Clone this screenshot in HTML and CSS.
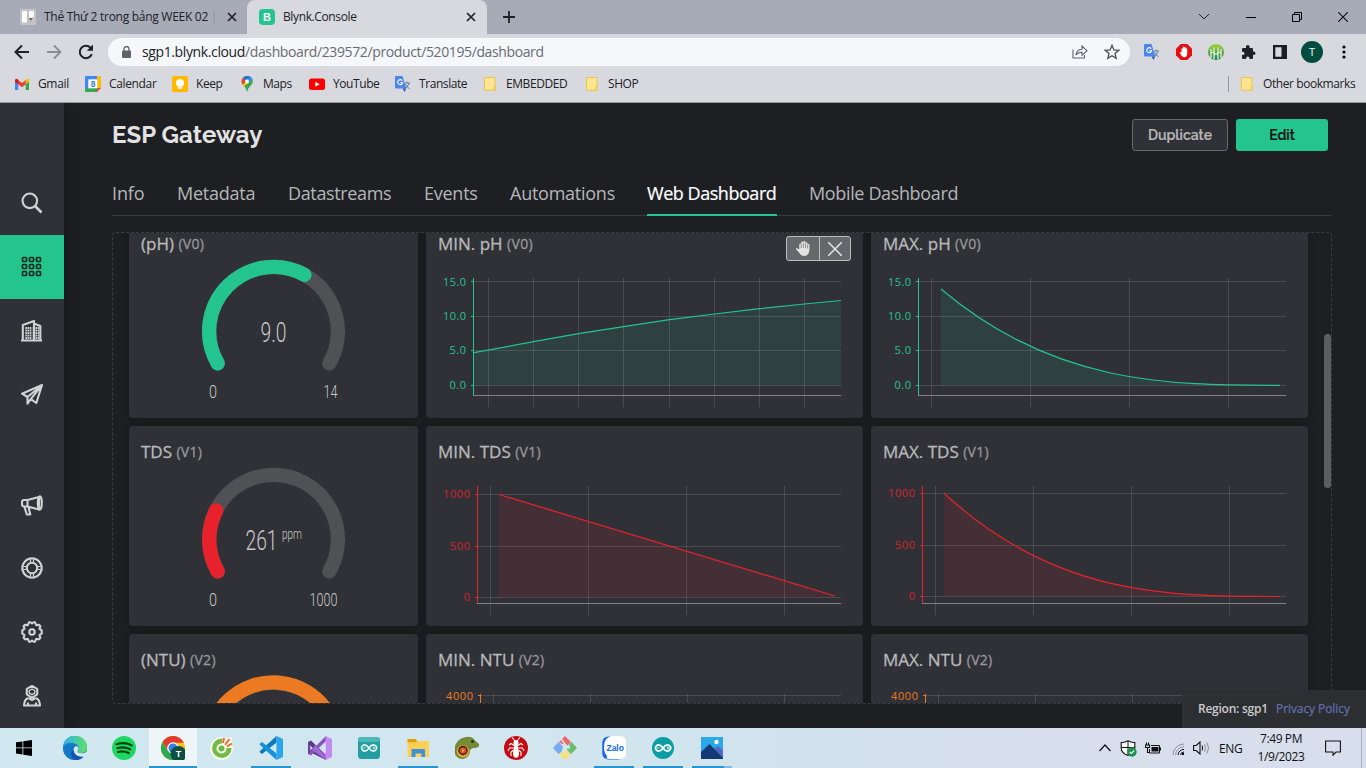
FILE: index.html
```html
<!DOCTYPE html>
<html lang="en">
<head>
<meta charset="utf-8">
<title>Blynk.Console</title>
<link rel="stylesheet" href="styles.css">
</head>
<body>
<svg class="defs" width="0" height="0">
  <defs>
    <symbol id="folder" viewBox="0 0 12 14"><path d="M.5.5h10.5v9.2l.5.3v3.3H.5z" fill="#ffe591" stroke="#ebc445"/><path d="M9.500 13V10.500q0-1 1-1h.6" fill="none" stroke="#ebc445"/></symbol>
    <symbol id="gtrans" viewBox="0 0 16 16"><path d="M7 4h8.200q.8 0 .8.8V15q0 .8-.8.8H9z" fill="#d5d8dd"/><path d="M1 0h6.500l3.800 12.500H1q-1 0-1-1V1q0-1 1-1z" fill="#4a86f0"/><path d="M7.500 12.500h3.800L9.500 16z" fill="#3059b8"/><path d="M7.300 4.700a2.500 2.500 0 1 0 .4 2H5.300" fill="none" stroke="#fff" stroke-width="1.100"/><path d="M9.500 7h5.300M12 5.600V7M14 7q-1 4-4 5.500M10.500 8.500q1.500 3 4.200 4.300" fill="none" stroke="#607d9b" stroke-width="1"/></symbol>
    <symbol id="close" viewBox="0 0 10 10"><path d="M1 1l8 8M9 1L1 9" stroke="#202124" stroke-width="1.700" fill="none"/></symbol>
  </defs>
</svg>

<header class="browser">
  <div class="tabstrip">
    <div class="tab tab-idle">
      <svg class="fav" viewBox="0 0 16 16"><rect width="16" height="16" rx="1.500" fill="#c3c3c3"/><rect x="2" y="2" width="5" height="11.500" rx="1" fill="#fff"/><rect x="9" y="2" width="5" height="7" rx="1" fill="#fff"/><path d="M7 7q2 4 6 1l-2 4z" fill="#666"/></svg>
      <span class="tab-title idle-title">Thẻ Thứ 2 trong bảng WEEK 02 <i class="cut">|</i></span>
      <svg class="tab-x" viewBox="0 0 10 10"><use href="#close"/></svg>
    </div>
    <div class="tab tab-active">
      <span class="fav blynk">B</span>
      <span class="tab-title active-title">Blynk.Console</span>
      <svg class="tab-x" viewBox="0 0 10 10"><use href="#close"/></svg>
    </div>
    <svg class="plus" viewBox="0 0 12 12"><path d="M6 0v12M0 6h12" stroke="#202124" stroke-width="1.800"/></svg>
    <div class="winbtns">
      <svg width="12" height="8" viewBox="0 0 12 8"><path d="M1 1l5 5 5-5" fill="none" stroke="#222"/></svg>
      <svg width="10" height="10" viewBox="0 0 10 10"><path d="M0 5.500h10" stroke="#000"/></svg>
      <svg width="10" height="10" viewBox="0 0 10 10"><path d="M.5 2.500h7v7h-7zM2.500 2.500v-2h7v7h-2" fill="none" stroke="#000"/></svg>
      <svg width="10" height="10" viewBox="0 0 10 10"><path d="M0 0l10 10M10 0L0 10" stroke="#111" stroke-width="1.100"/></svg>
    </div>
  </div>
  <div class="toolbar">
    <svg class="nav n1" viewBox="0 0 16 16"><path d="M15 8H2M8 1.500L1.500 8 8 14.500" fill="none" stroke="#202124" stroke-width="2"/></svg>
    <svg class="nav n2" viewBox="0 0 16 16"><path d="M1 8h13M8 1.500L14.500 8 8 14.500" fill="none" stroke="#8b8d93" stroke-width="1.800"/></svg>
    <svg class="nav n3" viewBox="0 0 16 16"><path d="M13.800 10.200a6.200 6.200 0 1 1-1.300-6.500" fill="none" stroke="#202124" stroke-width="2"/><path d="M15 .6v6.200H8.800z" fill="#202124"/></svg>
    <div class="omnibox">
      <svg class="lock" viewBox="0 0 9 12"><rect y="4.500" width="9" height="7.500" rx="1" fill="#5f6368"/><path d="M2 5V3a2.500 2.500 0 0 1 5 0v2" fill="none" stroke="#5f6368" stroke-width="1.300"/></svg>
      <span class="url"><b>sgp1.blynk.cloud</b>/dashboard/239572/product/520195/dashboard</span>
      <svg class="share" viewBox="0 0 16 14"><path d="M1 4.500V13h11.500v-3" fill="none" stroke="#5f6368" stroke-width="1.100"/><path d="M4 10q.5-5.500 6-5.800V1l5 4.700-5 4.600V7.200Q6 7 4 10z" fill="none" stroke="#5f6368" stroke-width="1.100"/></svg>
      <svg class="star" viewBox="0 0 16 16"><path d="M8 1.300l1.900 4.600 4.900.4-3.800 3.200 1.200 4.900L8 11.800l-4.200 2.600L5 9.500 1.200 6.300l4.900-.4z" fill="none" stroke="#4c4f54" stroke-width="1.300"/></svg>
    </div>
    <svg class="ext e1" viewBox="0 0 16 16"><use href="#gtrans"/></svg>
    <svg class="ext e2" viewBox="0 0 16 16"><path d="M4.700 0h6.600L16 4.700v6.600L11.300 16H4.700L0 11.300V4.700z" fill="#e80c13"/><path d="M5.500 10V5q0-.8.700-.8t.7.800V3.200q0-.7.700-.7t.7.700V3.800q0-.7.700-.7t.8.700V5q0-.7.700-.7t.7.700v5q0 3-3 3.200-2 0-3-2L3.700 8.500q.6-.7 1.800 0z" fill="#fff"/></svg>
    <svg class="ext e3" viewBox="0 0 16 16"><defs><linearGradient id="gg" x2="0" y2="1"><stop stop-color="#a8cf3c"/><stop offset="1" stop-color="#15894a"/></linearGradient></defs><circle cx="8" cy="8" r="8" fill="url(#gg)"/><path d="M3 5v9M6 3.500v12M10 3.500v12M13 5v9M3 8.500h3M10 8.500h3M6 10h4" stroke="#fff" stroke-width="1.100" fill="none"/></svg>
    <svg class="ext e4" viewBox="0 0 16 16"><path d="M6 2.700a1.800 1.800 0 0 1 3.600 0V4H12q1 0 1 1v2.500h.7a1.800 1.800 0 0 1 0 3.600H13V14q0 1-1 1H9.500v-.8a1.700 1.700 0 0 0-3.400 0v.8H3q-1 0-1-1v-2.900h.8a1.700 1.700 0 0 0 0-3.400H2V5q0-1 1-1h3z" fill="#202124"/></svg>
    <svg class="ext e5" viewBox="0 0 16 16"><path d="M1 1h14v14H1zM3.300 3.300v9.400h6.200V3.300z" fill="#1c1d20" fill-rule="evenodd"/></svg>
    <span class="avatar">T</span>
    <svg class="dots" viewBox="0 0 4 14"><circle cx="2" cy="2" r="1.600"/><circle cx="2" cy="7" r="1.600"/><circle cx="2" cy="12" r="1.600"/></svg>
  </div>
  <nav class="bookmarks">
    <a class="bm w71"><svg viewBox="0 0 16 16"><path d="M1 14V3.500L4.300 6V14z" fill="#4285f4"/><path d="M11.700 14V6L15 3.500V14z" fill="#34a853"/><path d="M3.500 3.500L8 7l4.500-3.500v4.300L8 11.200 3.500 7.800z" fill="#ea4335"/><path d="M1 4.500Q1 2 3.300 3l1 .8v4.500L1 5.800z" fill="#c5221f"/><path d="M15 4.500Q15 2 12.700 3l-1 .8v4.500L15 5.800z" fill="#fbbc04"/></svg><span>Gmail</span></a>
    <a class="bm w87"><svg viewBox="0 0 16 16"><path d="M0 1q0-1 1-1h11v4H4v8H0z" fill="#4285f4"/><path d="M12 0h3q1 0 1 1v11h-4z" fill="#fbbc04"/><path d="M0 12h12v4H1q-1 0-1-1z" fill="#34a853"/><path d="M12 12h4l-4 4z" fill="#ea4335"/><path d="M3.300 3.300h9v9h-9z" fill="#fff"/><text x="7.900" y="11" class="cal">8</text></svg><span>Calendar</span></a>
    <a class="bm w67"><svg viewBox="0 0 16 16"><rect width="16" height="16" rx="1.500" fill="#ffba00"/><circle cx="8" cy="7" r="4" fill="#fff"/><path d="M5.800 9.500h4.400v3.200H5.800z" fill="#fff"/><path d="M5.800 11h4.400" stroke="#ffd96a" stroke-width=".7"/></svg><span>Keep</span></a>
    <a class="bm w70"><svg viewBox="0 0 16 16"><path d="M8 16Q7 11.500 4 8.800A5.500 5.500 0 1 1 12.600 8.500Q9 11.500 8 16z" fill="#34a853"/><path d="M3.200 8L8.300 3l1.500 3.800L5.300 10.300z" fill="#fbbc04"/><path d="M2.500 5.500a5.600 5.600 0 0 1 2-4L8 5 3.500 8.500q-1-1.300-1-3z" fill="#ea4335"/><path d="M4.500 1.500q3-2.500 6.500-.9L7 5z" fill="#1a73e8"/><path d="M11 .6q2 .9 2.500 3.200L9.300 7 8.500 4z" fill="#4285f4"/><circle cx="8" cy="5.500" r="2" fill="#fff"/></svg><span>Maps</span></a>
    <a class="bm w86"><svg viewBox="0 0 16 16"><rect y="2.500" width="16" height="11.500" rx="2.500" fill="#f00"/><path d="M6.300 5.800v5l4.400-2.500z" fill="#fff"/></svg><span>YouTube</span></a>
    <a class="bm w88"><svg viewBox="0 0 16 16"><use href="#gtrans"/></svg><span>Translate</span></a>
    <a class="bm fold w102"><svg viewBox="0 0 12 14"><use href="#folder"/></svg><span>EMBEDDED</span></a>
    <a class="bm fold"><svg viewBox="0 0 12 14"><use href="#folder"/></svg><span>SHOP</span></a>
    <i class="bmsep"></i>
    <a class="bm fold other"><svg viewBox="0 0 12 14"><use href="#folder"/></svg><span>Other bookmarks</span></a>
  </nav>
</header>

<div class="app">
  <aside class="sidebar">
    <div class="side-group">
      <a class="side"><svg viewBox="0 0 22 22"><circle cx="8.800" cy="8.800" r="7.300"/><path d="M14 14l6.500 6.500" stroke-width="2.600"/></svg></a>
      <a class="side on"><svg viewBox="0 0 22 22"><g class="grid"><rect x="1.500" y="1.500" width="4" height="4" rx=".8"/><rect x="8.500" y="1.500" width="4" height="4" rx=".8"/><rect x="15.500" y="1.500" width="4" height="4" rx=".8"/><rect x="1.500" y="8.500" width="4" height="4" rx=".8"/><rect x="8.500" y="8.500" width="4" height="4" rx=".8"/><rect x="15.500" y="8.500" width="4" height="4" rx=".8"/><rect x="1.500" y="15.500" width="4" height="4" rx=".8"/><rect x="8.500" y="15.500" width="4" height="4" rx=".8"/><rect x="15.500" y="15.500" width="4" height="4" rx=".8"/></g></svg></a>
      <a class="side"><svg viewBox="0 0 22 22"><path d="M0 20.500h21M1.800 20V5L13 1v19M13 3.500L19.300 6v14"/><path d="M4.300 8h7M4.300 10.500h7M4.300 13h7M4.300 15.500h7M4.300 18h7M14.500 8h3.500M14.500 10.500h3.500M14.500 13h3.500M14.500 15.500h3.500M14.500 18h3.500" stroke-dasharray="1.600 .6" stroke-width="1.800"/></svg></a>
      <a class="side"><svg viewBox="0 0 22 22"><path d="M21 1L1 9.700l5.500 3.300v6.700l3.300-4.500 5.500 3.800zM21 1L6.500 13M21 1L9.800 15.200l-3 4"/></svg></a>
    </div>
    <div class="side-group">
      <a class="side low"><svg viewBox="0 0 22 22"><path d="M6.500 5L18 2v12.500L6.500 11.500H3Q1 11.500 1 9V7.500Q1 5 3 5zM6.500 5v6.500M3.500 12l2.300 7.500h3.500L7.500 12"/><ellipse cx="18.800" cy="8" rx="2" ry="6.600"/></svg></a>
      <a class="side"><svg viewBox="0 0 22 22"><circle cx="11" cy="11" r="9.700"/><circle cx="11" cy="11" r="5.200"/><path d="M9.500 1.500v4.500M12.500 1.500v4.500M9.500 16v4.500M12.500 16v4.500M1.500 9.500H6M1.500 12.500H6M16 9.500h4.500M16 12.500h4.500" stroke-width="1.200"/></svg></a>
      <a class="side"><svg viewBox="0 0 22 22"><path d="M8 1.300h1.500L11 2.500l1.500-1.200H14l1.200 2.800 3-.2 1.200 1.400-.9 2.600 2.200 1.500v3.200l-2.200 1.500.9 2.600-1.200 1.500-3-.3L14 20.700h-1.500L11 19.500l-1.500 1.200H8l-1.200-2.800-3 .3-1.200-1.500.9-2.600-2.200-1.500V9.400l2.200-1.500-.9-2.600 1.200-1.400 3 .2z"/><circle cx="11" cy="11" r="2.700"/></svg></a>
      <a class="side"><svg viewBox="0 0 22 22"><path d="M11 .9l5.200 3v5.500L11 12.800 5.800 9.400V3.900z"/><path d="M11 4l2.700 1.500v2.600L11 9.700 8.300 8.100V5.500z" stroke-width="1.400"/><path d="M7 13q-3.700 1.500-4 7.500h16q-.3-6-4-7.500M7.500 13L11 15l3.500-2M7 17.500v2.500M15 17.500v2.500"/></svg></a>
    </div>
  </aside>

  <main class="main">
    <div class="head">
      <h1>ESP Gateway</h1>
      <button class="btn dup"><span>Duplicate</span></button>
      <button class="btn edit"><span>Edit</span></button>
    </div>
    <nav class="tabs">
      <a class="t1"><span>Info</span></a><a class="t2"><span>Metadata</span></a><a class="t3"><span>Datastreams</span></a><a class="t4"><span>Events</span></a><a class="t5"><span>Automations</span></a><a class="t6 current"><span>Web Dashboard</span></a><a class="t7"><span>Mobile Dashboard</span></a>
    </nav>
    <section class="board">
      <div class="cards">
        <article class="card">
          <h2>(pH) <small>(V0)</small></h2>
          <svg class="gauge" viewBox="0 40 289 160"><path class="track" d="M88.700 145.400A64.400 64.400 0 1 1 200.300 145.400"/><path class="g" d="M88.700 145.400A64.400 64.400 0 0 1 175.400 56.800"/>
            <text class="val" x="131.500" y="124" textLength="26" lengthAdjust="spacingAndGlyphs">9.0</text><text class="lim" x="80" y="180" textLength="8" lengthAdjust="spacingAndGlyphs">0</text><text class="lim" x="194.500" y="180" textLength="14" lengthAdjust="spacingAndGlyphs">14</text></svg>
        </article>
        <article class="card green">
          <h2>MIN. pH <small>(V0)</small></h2>
          <svg class="chart" viewBox="0 40 437 160"><path class="grid-l" d="M48 63.500H415M48 98.500H415M48 132.500H415M48 167.500H415M62.500 60V189M107.500 60V189M152.500 60V189M197.500 60V189M243.500 60V189M288.500 60V189M333.500 60V189M378.500 60V189"/>
            <path class="area" d="M48 134.700L107.500 123.700 152.500 115.700 197.500 108.700 243.500 101.700 288.500 96 333.500 90.700 378.500 86 415 82.500V167.500H48z"/><path class="line" d="M48 134.700L107.500 123.700 152.500 115.700 197.500 108.700 243.500 101.700 288.500 96 333.500 90.700 378.500 86 415 82.500"/>
            <path class="base" d="M47 177.500H415"/><path class="axis" d="M47.500 60V177M45 63.500h3M45 98.500h3M45 132.500h3M45 167.500h3"/>
            <g class="lab"><text x="40" y="68" textLength="23">15.0</text><text x="40" y="102" textLength="23">10.0</text><text x="40" y="136" textLength="16.500">5.0</text><text x="40" y="171" textLength="16.500">0.0</text></g></svg>
        </article>
        <article class="card green">
          <h2>MAX. pH <small>(V0)</small></h2>
          <svg class="chart" viewBox="0 40 437 160"><path class="grid-l" d="M48 63.500H415M48 98.500H415M48 132.500H415M48 167.500H415M60.500 60V189M159.500 60V189M258.500 60V189M357.500 60V189"/>
            <path class="area" d="M70 71C183 166.500 296 167.300 409 167.300H70z"/><path class="line" d="M70 71C183 166.500 296 167.300 409 167.300"/>
            <path class="base" d="M47 177.500H415"/><path class="axis" d="M47.500 60V177M45 63.500h3M45 98.500h3M45 132.500h3M45 167.500h3"/>
            <g class="lab"><text x="40" y="68" textLength="23">15.0</text><text x="40" y="102" textLength="23">10.0</text><text x="40" y="136" textLength="16.500">5.0</text><text x="40" y="171" textLength="16.500">0.0</text></g></svg>
        </article>

        <article class="card">
          <h2>TDS <small>(V1)</small></h2>
          <svg class="gauge" viewBox="0 40 289 160"><path class="track" d="M88.700 145.400A64.400 64.400 0 1 1 200.300 145.400"/><path class="r" d="M88.700 145.400A64.400 64.400 0 0 1 87.200 84.500"/>
            <text class="val" x="116.500" y="124" textLength="32" lengthAdjust="spacingAndGlyphs">261</text><text class="unit" x="153" y="113" textLength="20" lengthAdjust="spacingAndGlyphs">ppm</text><text class="lim" x="80" y="180" textLength="8" lengthAdjust="spacingAndGlyphs">0</text><text class="lim" x="180.500" y="180" textLength="28" lengthAdjust="spacingAndGlyphs">1000</text></svg>
        </article>
        <article class="card red">
          <h2>MIN. TDS <small>(V1)</small></h2>
          <svg class="chart" viewBox="0 40 437 160"><path class="grid-l" d="M52 68.500H415M52 120.500H415M52 171.500H415M64.500 60V189M162.500 60V189M260.500 60V189M358.500 60V189"/>
            <path class="area" d="M73 68.500L409 170v1.500H73z"/><path class="line" d="M73 68.500L409 170"/>
            <path class="base" d="M51 177.500H415"/><path class="axis" d="M51.500 60V177M49 68.500h3M49 120.500h3M49 171.500h3"/>
            <g class="lab"><text x="44" y="72" textLength="27">1000</text><text x="44" y="124" textLength="20">500</text><text x="44" y="175">0</text></g></svg>
        </article>
        <article class="card red">
          <h2>MAX. TDS <small>(V1)</small></h2>
          <svg class="chart" viewBox="0 40 437 160"><path class="grid-l" d="M52 67.500H415M52 119.500H415M52 170.500H415M64.500 60V189M162.500 60V189M260.500 60V189M358.500 60V189"/>
            <path class="area" d="M73 67.300C185 170.500 297 170.500 409 170.500H73z"/><path class="line" d="M73 67.300C185 170.500 297 170.500 409 170.500"/>
            <path class="base" d="M51 177.500H415"/><path class="axis" d="M51.500 60V177M49 67.500h3M49 119.500h3M49 170.500h3"/>
            <g class="lab"><text x="44" y="71" textLength="27">1000</text><text x="44" y="123" textLength="20">500</text><text x="44" y="174">0</text></g></svg>
        </article>

        <article class="card">
          <h2>(NTU) <small>(V2)</small></h2>
          <svg class="gauge" viewBox="0 40 289 160"><path class="track" d="M88.700 145.400A64.400 64.400 0 1 1 200.300 145.400"/><path class="o" d="M88.700 145.400A64.400 64.400 0 1 1 208 104"/></svg>
        </article>
        <article class="card orange">
          <h2>MIN. NTU <small>(V2)</small></h2>
          <svg class="chart" viewBox="0 40 437 160"><path class="grid-l" d="M55 61.500H415M67.500 60V189M164.500 60V189M261.500 60V189M358.500 60V189"/><path class="axis" d="M54.500 60V177M52 61.500h3"/><g class="lab"><text x="47" y="66" textLength="27">4000</text></g></svg>
        </article>
        <article class="card orange">
          <h2>MAX. NTU <small>(V2)</small></h2>
          <svg class="chart" viewBox="0 40 437 160"><path class="grid-l" d="M55 61.500H415M67.500 60V189M164.500 60V189M261.500 60V189M358.500 60V189"/><path class="axis" d="M54.500 60V177M52 61.500h3"/><g class="lab"><text x="47" y="66" textLength="27">4000</text></g></svg>
        </article>
      </div>
      <div class="tools">
        <span><svg width="17" height="17" viewBox="0 0 16 16"><path d="M4 9V4.200q0-1 .9-1t.9 1V2.500q0-1 1-1t1 1V2q0-1 1-1t1 1v1q0-1 1-1t1 1v1.700q0-.9.900-.9t.9.900V9q0 6-5 6-3 0-4.500-2.800L.8 8.500q.5-1.700 3.200.5z" fill="#e2e2e2"/><path d="M5.900 4v3.500M7.900 3v4.500M9.900 3v4.500M11.900 4.500V8" stroke="#777" stroke-width=".7"/></svg></span>
        <span><svg width="14" height="14" viewBox="0 0 14 14"><path d="M0 0l14 14M14 0L0 14" stroke="#e6e6e6" stroke-width="1.500"/></svg></span>
      </div>
      <i class="thumb"></i>
    </section>
    <div class="region"><b>Region: sgp1</b><a>Privacy Policy</a></div>
  </main>
</div>

<footer class="taskbar">
  <span class="start"><svg width="16" height="16" viewBox="0 0 16 16"><path d="M0 2.300L6.500 1.400V7.500H0zM7.300 1.200L16 0v7.500H7.300zM0 8.300h6.500v6.200L0 13.600zM7.300 8.300H16V16L7.300 14.800z"/></svg></span>
  <span class="task"><svg viewBox="0 0 24 24"><defs><linearGradient id="e1" x2="1"><stop stop-color="#2cb0e8"/><stop offset="1" stop-color="#5fe06b"/></linearGradient><linearGradient id="e2" x2="1" y2="1"><stop stop-color="#1b8fdc"/><stop offset="1" stop-color="#0c4ba0"/></linearGradient></defs><circle cx="12" cy="12" r="12" fill="url(#e2)"/><path d="M0 11A12 12 0 0 1 24 12q0 4.500-5 5-4.500 0-4.500-2.300 1.500-1.500.8-4Q14 7.500 9 7 3 6.500 0 11z" fill="url(#e1)"/><path d="M14.500 14.500q-.2 3 5 2.700 3-.2 3.800-1.500l.8 1-3 4.500q-2 .2-5-.8-5.500-1.500-5.600-6.400 0-2.500 2-4 2.500 0 2.800 1.800.2 1.500-.8 2.700z" fill="#d4e9f2"/><path d="M10.500 14q0 5 5.600 6.400 2.500.8 5 .2-3.600 3.900-9.600 3.400-4-3-3-7.500z" fill="#0f56ad"/><path d="M0 11Q4 6 9 7q3.500.6 5 2.500-5-.5-6.300 4.300Q7 19 11 23.900 2 23 0 14z" fill="#167bcb" opacity=".75"/></svg></span>
  <span class="task"><svg viewBox="0 0 24 24"><circle cx="12" cy="12" r="12" fill="#1ed760"/><path d="M4.500 8.200q8.500-2.500 15.200 1.200M5.300 12.200q7-2 12.800 1.100M6 16q5.700-1.500 10.700 1" fill="none" stroke="#041" stroke-width="2.200" stroke-linecap="round"/></svg></span>
  <span class="task open focus"><svg viewBox="0 0 24 24"><circle cx="12" cy="12" r="12" fill="#fbc116"/><path d="M1.600 6A12 12 0 0 1 22.400 6L22.400 6.700H12L7 14.500z" fill="#e33b2e"/><path d="M1.600 6A12 12 0 0 0 12 24l5-9H7z" fill="#2da94f"/><circle cx="12" cy="12" r="5.800" fill="#fff"/><circle cx="12" cy="12" r="4.500" fill="#357fe8"/><circle cx="17.500" cy="18" r="8" fill="#0c5044"/><text x="17.500" y="21" class="tt">T</text></svg></span>
  <span class="task"><svg viewBox="0 0 24 24"><circle cx="11.500" cy="12.500" r="11.500" fill="#f5fbee"/><path d="M12 2.500a9.700 9.700 0 1 0 9.500 9.500h-5.300L12 8z" fill="#72bb45"/><path d="M12 2.500l1 6 3 3 6-3.500V1z" fill="#f5fbee"/><path d="M13 7l1-5M15 9l4.500-6M17 10.500l5-3" stroke="#f26a2b" stroke-width="2"/><circle cx="11.500" cy="12.500" r="5" fill="#f7fff0"/><circle cx="11.500" cy="12.500" r="3" fill="#6dba43"/></svg></span>
  <span class="task open"><svg viewBox="0 0 24 24"><path d="M17.500 6.500L3 18l-2-1.500q-1-.8 0-1.600L17.500 0z" fill="#0978bd"/><path d="M17.500 17.500L3 6 1 7.500q-1 .8 0 1.600L17.500 24z" fill="#1590db"/><path d="M17.500 0L24 3v18l-6.500 3z" fill="#2aa6ef"/></svg></span>
  <span class="task"><svg viewBox="0 0 24 24"><path d="M0 6l3-1.500L18 19v5L3 16.500 0 18z" fill="#5b3788"/><path d="M0 18l3 1.500L18 5V0L12 6 0 18z" fill="#8754bd"/><path d="M17.500 0L24 3v18l-6.500 3z" fill="#c58af2"/><path d="M0 6l4.500 6L0 18z" fill="#6b449a"/><path d="M7 9l11 11v4L4 14z" fill="#a267d8"/><path d="M13.500 12l4-4v8z" fill="#d0e6ef"/><path d="M2.300 9.500L4.800 12l-2.500 2.500z" fill="#d0e6ef"/></svg></span>
  <span class="task"><svg viewBox="0 0 24 24"><rect x="1" y="1" width="22" height="22" rx="3.500" fill="#249da0"/><rect x="1" y="1" width="22" height="5" rx="3" fill="#4db9b6"/><path d="M12 12q-3.500-4.500-6.200-2.500T5.800 14.500Q9 16.500 12 12q3-4.500 6.200-2.500t0 5Q15 16.500 12 12z" fill="none" stroke="#e8f7f6" stroke-width="1.500"/><path d="M5.500 12h3M15.500 12h3M17 10.500v3" stroke="#e8f7f6" stroke-width=".8"/></svg></span>
  <span class="task open"><svg viewBox="0 0 24 24"><path d="M1.500 3h8l2 2H23v16H1.500z" fill="#ffcf57"/><path d="M1.500 3h8l1.500 2-1 1.200H1.500z" fill="#dca000"/><path d="M5.500 21v-7q0-1 1-1H18q1 0 1 1v7h-3.500v-3.500H9.500V21z" fill="#3c91d8"/></svg></span>
  <span class="task"><svg viewBox="0 0 24 24"><path d="M0 13Q1 3 11 1.500q6-1 8 2.500l4.500 4q1 2-1 3l-5 .8-3 2Q15 21 8 22.500q-7 0-8-6z" fill="#768b32" stroke="#52621c" stroke-width=".6"/><circle cx="8" cy="15.300" r="6.200" fill="#e9a727"/><circle cx="8" cy="14.500" r="4.700" fill="#222"/><circle cx="8" cy="14.500" r="3.300" fill="#ed4c22"/><circle cx="8" cy="14.500" r="1.100" fill="#fc3"/><circle cx="17.500" cy="5.500" r="1.500" fill="#283011"/></svg></span>
  <span class="task"><svg viewBox="0 0 24 24"><circle cx="12" cy="12" r="12" fill="#c70b12"/><ellipse cx="12" cy="7" rx="2.500" ry="3" fill="#fff"/><ellipse cx="12" cy="12" rx="2" ry="3" fill="#fff"/><ellipse cx="12" cy="17.500" rx="3" ry="4.200" fill="#fff"/><path d="M11 5L8 1.500M13 5l3-3.500M11 10L7 7.500 5 9M13 10l4-2.500 2 1.500M10.500 12H5.500L4 15M13.500 12h5l1.500 3M10.500 13.500L7 16v4M13.500 13.500L17 16v4" stroke="#fff" stroke-width="1.100" fill="none"/></svg></span>
  <span class="task"><svg viewBox="0 0 24 24"><path d="M12 0l6 6-4 4-2-2-3 0-3-2z" fill="#f0666b"/><path d="M18.500 6L24 12l-6 6-4.500-4.500L17 10l-1-2z" fill="#69bf69"/><path d="M5.500 6L10 10.500 8.500 16l-3 2L0 12z" fill="#78a9f4"/><path d="M12 12.500l5.500 5.500-5.500 6-6-6 4-2z" fill="#f9e178"/><path d="M8 3l5 6.500v9M13 9.500l4 3" stroke="#d5e5ec" stroke-width="1.600" fill="none"/></svg></span>
  <span class="task open"><svg viewBox="0 0 24 24"><rect x=".3" y=".5" width="22" height="23" rx="6" fill="#1267ee"/><path d="M9 0h9q6 0 6 6v11q0 6-6 6H9q-3 0-5-.7 1.500-1 .9-2.500Q2 17 2 11 2 2 9 0z" fill="#fff"/><text x="13.200" y="14.500" class="zalo" textLength="17.500" lengthAdjust="spacingAndGlyphs">Zalo</text></svg></span>
  <span class="task open"><svg viewBox="0 0 24 24"><circle cx="12" cy="12" r="11" fill="#0a9da2"/><path d="M12 12q-3.500-4.500-6.200-2.500T5.800 14.500Q9 16.500 12 12q3-4.500 6.200-2.500t0 5Q15 16.500 12 12z" fill="none" stroke="#fff" stroke-width="1.800"/><path d="M6 12h2.500M15.500 12h3M17 10.500v3" stroke="#fff" stroke-width=".8"/></svg></span>
  <span class="task open photos"><svg viewBox="0 0 24 24"><rect x="1" y="1" width="22" height="22" fill="#29a9ea"/><path d="M10 16l8-6 5 4v9H10z" fill="#5369c9"/><path d="M1 16L9.500 8 23 22v1H1z" fill="#143a74"/><circle cx="16.500" cy="6" r="2.200" fill="#fff"/></svg></span>
  <div class="tray">
    <svg class="y1" width="12" height="8" viewBox="0 0 12 8"><path d="M.5 7L6 1l5.500 6" fill="none" stroke="#111" stroke-width="1.200"/></svg>
    <svg class="y2" width="17" height="17" viewBox="0 0 17 17"><path d="M8 .8q3 2 6.800 1.700V8q0 5-6.800 7.500Q1.200 13 1.200 8V2.500Q5 2.800 8 .8z" fill="#fff" stroke="#111" stroke-width="1.100"/><path d="M8 1v14M1.500 7.500h13" stroke="#111"/><circle cx="12" cy="12" r="4.700" fill="#17964c"/><path d="M9.800 12l1.600 1.500 2.800-3" fill="none" stroke="#fff" stroke-width="1.200"/></svg>
    <svg class="y3" width="16" height="12" viewBox="0 0 16 12"><path d="M6.500 5h7v4.500h-7z" fill="#111"/><path d="M6 3.500h8.500V11H4.500V7M15.500 5.500v3" fill="none" stroke="#111"/><path d="M.5 3h4v2.500h-4zM1.500 3V.5M3.500 3V.5M2.500 6v4.500h2" fill="none" stroke="#111" stroke-width="1.100"/></svg>
    <svg class="y4" width="12" height="12" viewBox="0 0 12 12"><path d="M1 12A11 11 0 0 1 12 1M3.500 12A8.500 8.500 0 0 1 12 3.800" fill="none" stroke="#8b929c"/><path d="M6 12A6 6 0 0 1 12 6.400M8.500 12A3.500 3.500 0 0 1 12 9" fill="none" stroke="#111"/><circle cx="11" cy="11" r="1.200"/></svg>
    <svg class="y5" width="17" height="14" viewBox="0 0 17 14"><path d="M.6 4.500h2.600L7 1v12L3.200 9.500H.6z" fill="none" stroke="#111" stroke-width="1.100"/><path d="M9 4.500q1.300 2.500 0 5" fill="none" stroke="#111"/><path d="M11.500 3q2 4 0 8M14 1.500q3 5.500 0 11" fill="none" stroke="#8b929c"/></svg>
    <span class="eng">ENG</span>
    <span class="clock"><span>7:49 PM</span><span>1/9/2023</span></span>
    <svg class="y6" width="16" height="16" viewBox="0 0 16 16"><path d="M.6 1h14.800v11H11l-3 3.200V12H.6z" fill="none" stroke="#111" stroke-width="1.100"/></svg>
    <i class="peek"></i>
  </div>
</footer>
</body>
</html>
```
FILE: styles.css
```css
* { box-sizing: border-box; }
body { margin: 0; width: 1366px; height: 768px; overflow: hidden; display: flex; flex-direction: column; font-family: "Open Sans", "Noto Sans", sans-serif; }
svg { display: block; flex: none; }
.defs { position: absolute; }

/* Browser chrome */
.browser { height: 103px; flex: none; background: #d8d9df; border-bottom: 1px solid #96979b; color: #202124; font-size: 12px; }
.tabstrip { height: 34px; background: #a7abb7; display: flex; align-items: center; }
.tab { height: 34px; display: flex; align-items: center; }
.tab-idle { width: 247px; padding-left: 20px; }
.tab-active { width: 240px; padding-left: 12px; background: #d8d9df; border-radius: 8px 8px 0 0; }
.fav { width: 16px; height: 16px; }
.blynk { background: #24c48e; border-radius: 4px; color: #fff; font: bold 11px/16px "Liberation Sans", sans-serif; text-align: center; }
.tab-title { margin-left: 8px; width: 172px; white-space: nowrap; line-height: 18px; }
.idle-title { letter-spacing: -.28px; }
.cut { font-style: normal; color: #858994; }
.active-title { letter-spacing: -.38px; }
.tab-x { width: 10px; height: 10px; margin-left: 11px; }
.plus { width: 12px; height: 12px; margin-left: 16px; }
.winbtns { margin-left: auto; display: flex; align-items: center; gap: 36px; padding-right: 18px; height: 28px; }
.toolbar { height: 36px; display: flex; align-items: center; }
.nav { width: 16px; height: 16px; }
.n1 { margin-left: 14px; }
.n2, .n3 { margin-left: 16px; }
.omnibox { width: 1022px; height: 28px; border-radius: 14px; background: #f5f7fa; margin-left: 14px; display: flex; align-items: center; padding-left: 14px; }
.lock { width: 9px; height: 12px; }
.url { margin-left: 11px; font-size: 14px; line-height: 20px; width: 920px; color: #696c72; white-space: nowrap; letter-spacing: -.38px; }
.url b { font-weight: 400; color: #202124; }
.share { width: 16px; height: 14px; margin-left: 10px; }
.star { width: 16px; height: 16px; margin-left: 16px; }
.ext { width: 16px; height: 16px; margin-left: 16px; }
.e1 { margin-left: 14px; }
.avatar { width: 22px; height: 22px; border-radius: 50%; background: #004d40; color: #fff; font-size: 11px; line-height: 22px; text-align: center; margin-left: 13px; }
.dots { width: 4px; height: 14px; margin-left: 19px; }
.bookmarks { height: 32px; display: flex; align-items: center; padding: 0 10px 5px 14px; }
.bm { display: flex; align-items: center; gap: 8px; white-space: nowrap; letter-spacing: -.42px; }
.bm svg { width: 16px; height: 16px; }
.w71, .w87 { letter-spacing: -.35px; }
.fold { gap: 10px; }
.fold svg { width: 12px; height: 14px; }
.w71 { width: 71px; } .w87 { width: 87px; } .w67 { width: 67px; } .w70 { width: 70px; } .w86 { width: 86px; } .w88 { width: 89px; } .w102 { width: 102px; }
.cal { font: bold 8.500px "Liberation Sans", sans-serif; fill: #3b78e7; text-anchor: middle; }
.bmsep { width: 1px; height: 16px; background: #94969c; margin-left: auto; }
.other { margin-left: 12px; width: 115px; }

/* Application shell */
.app { height: 625px; flex: none; display: flex; background: #1e1f23; }
.sidebar { width: 64px; background: #303136; padding-top: 68px; display: flex; flex-direction: column; justify-content: space-between; box-shadow: 3px 0 10px rgba(0,0,0,.25); clip-path: inset(0 -20px 0 0); z-index: 1; }
.side { height: 64px; display: flex; align-items: center; justify-content: center; }
.side svg { width: 22px; height: 22px; fill: none; stroke: #d2d2d4; stroke-width: 2.100; stroke-linejoin: round; }
.side.on { background: #24c48e; }
.side.on svg { stroke: #0d2b21; stroke-width: 1.700; }
.side.low { padding-top: 4px; }
.main { position: relative; width: 1302px; padding: 0 34px 0 48px; }
.head { height: 64px; display: flex; align-items: center; padding-right: 4px; }
h1 { margin: 0 auto 0 0; font: 700 24px/32px Raleway, Lato, sans-serif; color: #e2e2e2; letter-spacing: .08px; }
.btn { height: 32px; border-radius: 3px; padding: 0; font: 600 14px/30px Raleway, Lato, sans-serif; -webkit-text-stroke: .2px; }
.dup { width: 96px; border: 1px solid #66676b; background: #303136; color: #b8b8ba; }
.edit { width: 92px; border: 0; background: #24c48e; color: #06120e; margin-left: 8px; }
.tabs { height: 49px; display: flex; border-bottom: 1px solid #38393d; font-size: 18px; color: #b5b6b8; letter-spacing: -.36px; }
.tabs a { height: 49px; line-height: 52px; white-space: nowrap; margin-right: 32px; }
.tabs .t1 { letter-spacing: -.1px; }
.tabs .t2, .tabs .t4, .tabs .t5 { letter-spacing: -.25px; }
.tabs .current { color: #fff; border-bottom: 2px solid #24c48e; -webkit-text-stroke: .2px; letter-spacing: -.46px; }
.t1 { width: 33px; } .t2 { width: 79px; } .t3 { width: 104px; } .t4 { width: 54px; } .t5 { width: 105px; } .t6 { width: 130px; } .t7 { width: 149px; }

/* Dashboard */
.board { position: relative; height: 472px; margin-top: 16px; border: 1px dashed #3b3c40; border-radius: 4px; overflow: hidden; padding-left: 16px; }
.cards { display: grid; grid-template-columns: 289px 437px 437px; grid-auto-rows: 200px; gap: 8px; margin-top: -15px; }
.card { background: #303136; border-radius: 4px; box-shadow: 0 0 10px rgba(0,0,0,.3); overflow: hidden; }
h2 { margin: 0; height: 40px; padding: 14px 0 0 12px; font-size: 17px; line-height: 24px; font-weight: 400; color: #b9b9bb; white-space: nowrap; -webkit-text-stroke: .3px; }
h2 small { font-size: 14px; color: #97989a; position: relative; top: -1px; letter-spacing: .3px; }
.gauge { width: 289px; height: 160px; }
.chart { width: 437px; height: 160px; }
.gauge path { fill: none; stroke-width: 14.300; stroke-linecap: round; }
.gauge .track { stroke: #505155; }
.gauge .g { stroke: #24c48e; }
.gauge .r { stroke: #e8222c; }
.gauge .o { stroke: #ec7a22; }
.gauge text { font-family: Roboto, sans-serif; font-weight: 300; fill: #c8c8ca; }
.val { font-size: 28px; }
.lim { font-size: 18px; }
.unit { font-size: 14px; }
.chart path { fill: none; stroke-width: 1; }
.green { --c: #24c48e; }
.red { --c: #e8222c; }
.orange { --c: #ec7a22; }
.chart .grid-l { stroke: rgba(255,255,255,.13); }
.chart .area { fill: var(--c); opacity: .11; }
.chart .line { stroke: var(--c); stroke-width: 1.200; }
.chart .base { stroke: #808184; }
.chart .axis { stroke: var(--c); }
.lab text { font: 11px "Open Sans", sans-serif; fill: var(--c); text-anchor: end; }
.red .lab text { opacity: .85; }
.tools { position: absolute; left: 673px; top: 3px; width: 65px; height: 25px; display: flex; border: 1px solid #bdbdbd; border-radius: 3px; background: #66676a; }
.tools span { width: 32px; display: flex; align-items: center; justify-content: center; }
.tools span + span { width: 31px; border-left: 1px solid #bdbdbd; }
.thumb { position: absolute; right: 0; top: 101px; width: 7px; height: 154px; border-radius: 4px; background: #5c5d60; }
.region { position: absolute; right: 0; bottom: 0; width: 184px; height: 38px; background: rgba(46,47,52,.95); padding-left: 16px; display: flex; gap: 9px; font-size: 12px; line-height: 38px; white-space: nowrap; }
.region b { color: #cacacc; width: 69px; font-weight: 600; letter-spacing: -.25px; }
.region a { color: #6272b0; letter-spacing: -.08px; -webkit-text-stroke: .2px; }

/* Taskbar */
.taskbar { height: 40px; flex: none; display: flex; background: linear-gradient(90deg, #d1e8f0 0%, #d1e5ee 50%, #d7deec 78%, #d8dfec 100%); font-size: 12px; color: #111; }
.start { width: 48px; margin-right: 2px; display: flex; align-items: center; justify-content: center; }
.task { width: 49px; display: flex; flex-direction: column; align-items: center; padding-top: 8px; }
.task svg { width: 24px; height: 24px; }
.task.open::after { content: ""; width: 40px; height: 2px; background: #2894d2; margin-top: 6px; }
.task.focus { background: linear-gradient(90deg, transparent 1px, #eef5f9 1px); }
.task.focus::after { width: 48px; margin-left: 1px; }
.task.photos::after { background: linear-gradient(90deg, #2894d2 32px, #84bee0 32px); }
.tt { font: bold 9px "Liberation Sans", sans-serif; fill: #fff; text-anchor: middle; }
.zalo { font: bold 8.500px "Liberation Sans", sans-serif; fill: #1267ee; text-anchor: middle; }
.tray { margin-left: auto; width: 267px; display: flex; align-items: center; }
.y2 { margin-left: 9px; } .y3 { margin-left: 8px; } .y4 { margin-left: 11px; margin-top: 2px; } .y5 { margin-left: 9px; }
.eng { margin-left: 9px; width: 23px; letter-spacing: -.4px; }
.clock { width: 50px; margin-left: 14px; display: flex; flex-direction: column; align-items: center; line-height: 18px; letter-spacing: -.4px; white-space: nowrap; }
.y6 { margin-left: 19px; }
.peek { width: 1px; height: 40px; background: #aab2bd; margin-left: 20px; }
```
